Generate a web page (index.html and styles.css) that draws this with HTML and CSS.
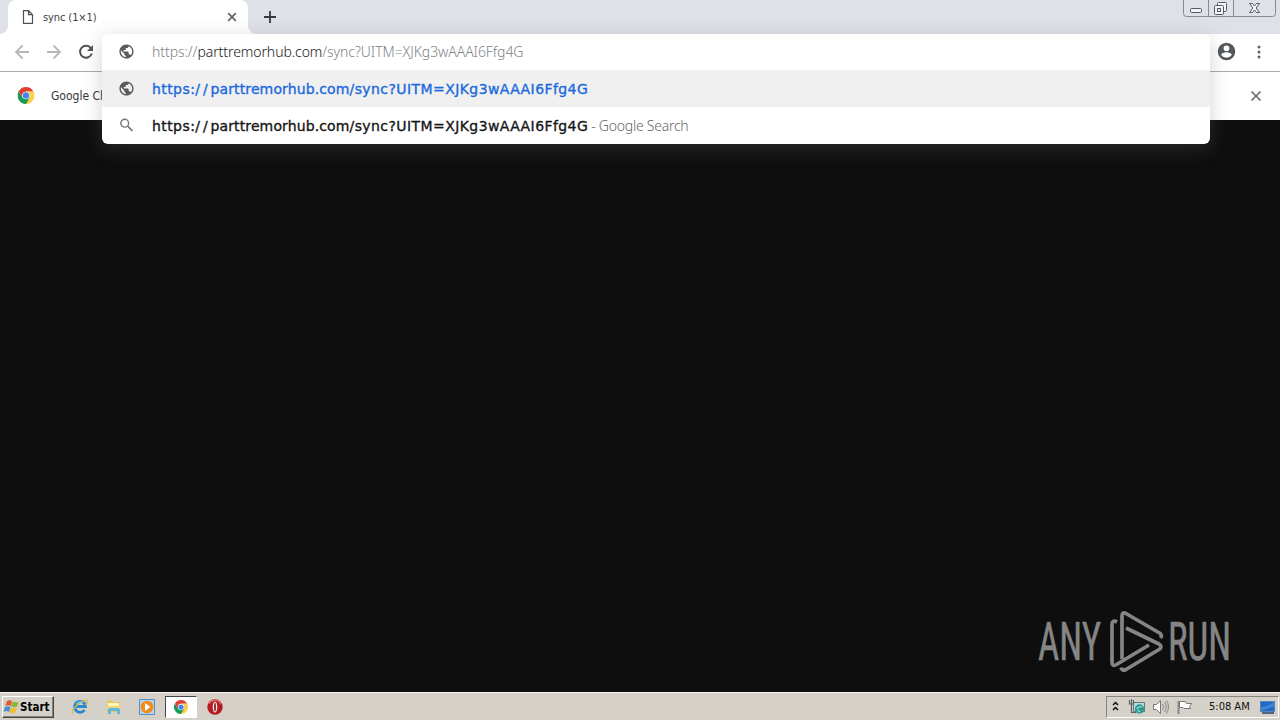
FILE: index.html
```html
<!DOCTYPE html>
<html lang="en">
<head>
<meta charset="utf-8">
<title>sync (1×1)</title>
<link rel="stylesheet" href="styles.css">
</head>
<body>
<svg class="defs" width="0" height="0">
  <defs>
    <symbol id="globe" viewBox="0 0 24 24"><path d="M12 2C6.480 2 2 6.480 2 12s4.480 10 10 10 10-4.480 10-10S17.520 2 12 2zm-1 17.930c-3.950-.490-7-3.850-7-7.930 0-.620.080-1.210.210-1.790L9 15v1c0 1.100.900 2 2 2v1.930zm6.900-2.540c-.260-.810-1-1.390-1.900-1.390h-1v-3c0-.550-.450-1-1-1H8v-2h2c.550 0 1-.450 1-1V7h2c1.100 0 2-.900 2-2v-.410c2.930 1.190 5 4.060 5 7.410 0 2.080-.800 3.970-2.100 5.390z"/></symbol>
    <symbol id="chrome" viewBox="0 0 16 16">
      <path d="M8 4h6.930A8 8 0 0 1 8 16z" fill="#fcd04b"/>
      <path d="M8 8l3.460 2L8 16A8 8 0 0 1 1.070 4l3.470 6z" fill="#139b57"/>
      <path d="M1.070 4 4.540 10 8 8V4h6.930A8 8 0 0 0 1.070 4z" fill="#df3e30"/>
      <circle cx="8" cy="8" r="3.600" fill="#fff"/><circle cx="8" cy="8" r="3" fill="#4586ed"/>
    </symbol>
  </defs>
</svg>
<div class="screen">
  <header class="tabstrip">
    <div class="tab">
      <svg class="doc" width="12" height="14" viewBox="0 0 12 14"><path d="M1.500 .700h5l4 4V13.300h-9zM6.500 .700v4h4" fill="none" stroke="#4d5156" stroke-width="1.200"/></svg>
      <span class="tab-title">sync (1×1)</span>
      <svg width="10" height="10" viewBox="0 0 10 10"><path d="M1.200 1.200l7.600 7.600M8.800 1.200L1.200 8.800" stroke="#606367" stroke-width="1.700"/></svg>
    </div>
    <svg class="newtab" width="12" height="12" viewBox="0 0 12 12"><path d="M6 0v12M0 6h12" stroke="#36393d" stroke-width="1.800"/></svg>
    <svg class="winbtns" width="94" height="18" viewBox="0 0 94 18">
      <path d="M.500 0v13.500a3 3 0 0 0 3 3h86a3 3 0 0 0 3-3V0M25.500 0v16M50.500 0v16" fill="none" stroke="#858a94"/>
      <g fill="#f3f4f6" stroke="#555963"><rect x="7.500" y="8.500" width="11" height="4" rx="1"/><rect x="34.500" y="2.500" width="9" height="9" rx="1"/><rect x="31.500" y="5.500" width="9" height="9" rx="1"/><rect x="34.500" y="8.500" width="3" height="3"/>
      <path d="M66.500 3.500h3l2 2.500 2-2.500h3l-3.300 4.500 3.300 4.500h-3l-2-2.500-2 2.500h-3L69.800 8z"/></g>
    </svg>
  </header>
  <div class="toolbar">
    <svg width="16" height="16" viewBox="0 0 16 16"><path d="M15 8H2M8.500 1.500L2 8l6.500 6.500" fill="none" stroke="#b6b8ba" stroke-width="1.800"/></svg>
    <svg width="16" height="16" viewBox="0 0 16 16"><path d="M1 8h13M7.500 1.500L14 8l-6.500 6.500" fill="none" stroke="#b6b8ba" stroke-width="1.800"/></svg>
    <svg width="16" height="16" viewBox="0 0 16 16"><path d="M13 4.300A6 6 0 1 0 13.800 9.500" fill="none" stroke="#505357" stroke-width="2"/><path d="M15 1v6H9z" fill="#505357"/></svg>
    <svg class="avatar" width="21" height="21" viewBox="0 0 24 24"><path fill="#54575b" d="M12 2a10 10 0 1 0 0 20 10 10 0 0 0 0-20zm0 3a3.300 3.300 0 1 1 0 6.600A3.300 3.300 0 0 1 12 5zm0 14.200a7.200 7.200 0 0 1-6-3.220c.030-1.990 4-3.080 6-3.080s5.970 1.090 6 3.080a7.200 7.200 0 0 1-6 3.220z"/></svg>
    <svg class="dots" width="4" height="14" viewBox="0 0 4 14" fill="#606367"><circle cx="2" cy="2" r="1.500"/><circle cx="2" cy="7" r="1.500"/><circle cx="2" cy="12" r="1.500"/></svg>
  </div>
  <div class="infobar">
    <svg width="18" height="17" viewBox="-.500 0 17 16"><use href="#chrome" width="16" height="16"/></svg>
    <span class="info-text">Google Chrome</span>
    <svg class="info-close" width="12" height="12" viewBox="0 0 12 12"><path d="M1.500 1.500l9 9M10.500 1.500l-9 9" stroke="#696c70" stroke-width="1.700"/></svg>
  </div>
  <main class="page">
    <svg class="watermark" width="194" height="64" viewBox="0 0 194 64">
      <g class="brand"><text x="0" y="51" textLength="63" lengthAdjust="spacingAndGlyphs">ANY</text><text x="130" y="51" textLength="63" lengthAdjust="spacingAndGlyphs">RUN</text></g>
      <g fill="none" stroke="#858585" stroke-width="3.700" stroke-linejoin="round">
        <path d="M84 50V7Q84 2.500 88 4.500L121.500 24q3 2 1 5"/>
        <path d="M79 13q-5-2.500-5 2.500V53q0 5 4.500 2.500L111 36"/>
        <path d="M88 19l33 16q4 2.500 0 5.500L88 60.500q-4 2-5-2"/>
      </g>
    </svg>
  </main>
  <footer class="taskbar">
    <div class="start"><svg width="17" height="16" viewBox="0 0 17 16"><path d="M4 2q2.500-1.500 5 0L7.800 7q-2.500-1.500-5.500 0z" fill="#e65b25"/><path d="M9.600 2.500q3 1.500 6 .300L14 7.700q-3 1.500-6-.400z" fill="#8aba3d"/><path d="M2 8q3-1.500 5.500 0l-1.500 5q-3-2-5.500 0z" fill="#468fd5"/><path d="M7.900 8.500q3 1.500 6 .300L12.300 13.700q-3 1.500-6-.400z" fill="#f2bd32"/></svg><span>Start</span></div>
    <div class="launch">
      <svg width="18" height="18" viewBox="0 0 18 18"><path d="M13.500 12A5.500 5.500 0 1 1 14.500 8.500H5" fill="none" stroke="#2789d0" stroke-width="2.800"/><path d="M2 16Q-1 13 7 6.500T16.500 3q0 2-2 4" fill="none" stroke="#d8b74b" stroke-width="1.300"/><path d="M5 6q3-4 7-1" fill="none" stroke="#80ccef"/></svg>
      <svg width="18" height="18" viewBox="0 0 18 18"><path d="M2 3l5-1 1 2h7v10H2z" fill="#e8c865"/><path d="M3 5h11v4H3z" fill="#fff4ba"/><path d="M2 8h14v3H2z" fill="#ecd783"/><path d="M3 16v-4q0-2 2-2h8q2 0 2 2v4h-3v-3H6v3z" fill="#65b6dc"/></svg>
      <svg width="18" height="18" viewBox="0 0 18 18"><path d="M1.500 1.500h15v15h-15z" fill="#b4d3ed" stroke="#5591c6"/><circle cx="9" cy="9" r="6.300" fill="#f28b18"/><path d="M7 5l5.500 4L7 13z" fill="#fff"/></svg>
      <div class="active"><svg width="14" height="14"><use href="#chrome"/></svg></div>
      <svg width="18" height="18" viewBox="0 0 18 18"><circle cx="9" cy="9" r="7.700" fill="#b51b20"/><path d="M3 6q2-4 6-4t6 4" fill="none" stroke="#dc6b69" stroke-width="1.500"/><ellipse cx="9" cy="9" rx="2.300" ry="5.500" fill="#f4eeeb"/><ellipse cx="9" cy="9" rx=".900" ry="4.500" fill="#8b1a1d"/></svg>
    </div>
    <div class="tray">
      <svg width="8" height="12" viewBox="0 0 8 12"><path d="M1 4L3.500 1.500 6 4M1 9L3.500 6.500 6 9" fill="none" stroke="#111" stroke-width="1.500"/></svg>
      <svg class="net" width="18" height="16" viewBox="0 0 18 16"><path d="M5.500 3.500h11v9h-11z" fill="#b9ddd9" stroke="#67777a"/><path d="M1.500 1v4h4V1M3.500 0v13.500H8" fill="none" stroke="#5b6264" stroke-width="1.200"/><circle cx="11.500" cy="10" r="4.700" fill="#2d9a96"/><path d="M9 10q1-3 5-2M12 13q-2-1-2-2" fill="none" stroke="#b7e8dc" stroke-width="1.200"/></svg>
      <svg class="sound" width="18" height="16" viewBox="0 0 18 16"><path d="M1.500 5.500h3l4-4v13l-4-4h-3z" fill="#fff" stroke="#777"/><path d="M10.500 5q2 3 0 6M12.500 3q3.500 5 0 10M14.500 1.500q4 6.500 0 13" fill="none" stroke="#888"/></svg>
      <svg class="flag" width="17" height="16" viewBox="0 0 17 16"><path d="M2.500 2v13" stroke="#888" stroke-width="2"/><path d="M3.500 2.500h6l1 2h5l-2 3 1 2H8l-1-1H3.500z" fill="#fff" stroke="#777"/></svg>
      <span class="clock">5:08 AM</span>
      <svg width="17" height="14" viewBox="0 0 17 14"><rect x="1.500" y="1.500" width="14" height="10" fill="#236bc1" stroke="#5684bb"/><path d="M2 7Q9 7 15 2v4L2 11z" fill="#3d86d4"/><path d="M3 13h12" stroke="#244568" stroke-width="1.500"/></svg>
    </div>
  </footer>
  <section class="suggestions">
    <div class="row input"><svg class="icon" width="17" height="17"><use href="#globe"/></svg><span class="url">https://<b>parttremorhub.com</b>/sync?UITM=XJKg3wAAAI6Ffg4G</span></div>
    <div class="row selected"><svg class="icon" width="17" height="17"><use href="#globe"/></svg><span class="match">https:<span class="slashes">//</span><span class="host">parttremorhub.com</span>/sync?UITM=XJKg3wAAAI6Ffg4G</span></div>
    <div class="row"><svg class="icon" width="17" height="17" viewBox="0 0 17 17"><circle cx="6.700" cy="6.200" r="3.900" fill="none" stroke="#74777b" stroke-width="1.400"/><path d="M9.700 9.200l4.800 4.800" stroke="#74777b" stroke-width="1.700"/></svg><span class="match">https:<span class="slashes">//</span><span class="host">parttremorhub.com</span>/sync?UITM=XJKg3wAAAI6Ffg4G</span><span class="engine">- Google Search</span></div>
  </section>
</div>
</body>
</html>
```
FILE: styles.css
```css
* { box-sizing: border-box; }
body { margin: 0; font-family: "DejaVu Sans Condensed", "DejaVu Sans", sans-serif; font-stretch: condensed; }
svg { display: block; flex: none; }
.defs { position: absolute; }
.screen { position: relative; display: flex; flex-direction: column; width: 1280px; height: 720px; overflow: hidden; background: #0e0e0e; white-space: nowrap; }
.tabstrip { display: flex; height: 34px; padding-left: 8px; background: #dee1e7; }
.tab { position: relative; display: flex; align-items: center; width: 240px; padding: 0 11px 0 14px; background: #fff; border-radius: 8px 8px 0 0; }
.tab::before, .tab::after { content: ""; position: absolute; bottom: 0; width: 8px; height: 8px; }
.tab::before { left: -8px; background: radial-gradient(circle at 0 0, transparent 7.5px, #fff 8px); }
.tab::after { right: -8px; background: radial-gradient(circle at 100% 0, transparent 7.5px, #fff 8px); }
.tab-title { flex: 1; margin-left: 9px; font-size: 11px; letter-spacing: -0.1px; color: #3c4043; }
.newtab { margin: 11px 0 0 16px; }
.winbtns { margin-left: auto; margin-right: 3px; }
.toolbar { display: flex; align-items: center; gap: 16px; height: 38px; padding: 0 19.5px 2px 14px; background: #fff; border-bottom: 1px solid #a8a9ab; }
.avatar { margin-left: auto; }
.dots { margin-left: 4px; }
.infobar { display: flex; align-items: center; height: 48px; padding: 0 18px 1px 17px; background: #fff; }
.info-text { margin-left: 16px; font-size: 12px; color: #34373a; }
.info-close { margin-left: auto; }
.page { display: flex; flex: 1; align-items: flex-end; justify-content: flex-end; padding: 0 48px 19px 0; background: #0e0e0e; }
.watermark { overflow: visible; }
.brand { font-family: Roboto, sans-serif; font-size: 53px; font-weight: 400; fill: #858585; stroke: #858585; stroke-width: .5px; }
.taskbar { display: flex; align-items: center; height: 28px; padding: 0 1px 0 2px; background: #d5d0c8; border-top: 1px solid #f4f2ed; }
.start { display: flex; align-items: center; width: 52px; height: 22px; padding-left: 0; border: 1px solid; border-color: #fff #454545 #454545 #fff; box-shadow: inset -1px -1px #88847e; font-size: 11.500px; font-weight: bold; color: #000; }
.launch { display: flex; align-items: center; gap: 16px; margin-left: 17px; }
.launch > :nth-child(3) { margin-left: -1px; }
.active { display: flex; align-items: center; justify-content: center; width: 32px; height: 22px; margin: 0 -7px; background: #fff; border: 1px solid; border-color: #444 #fff #fff #444; }
.tray { display: flex; align-items: center; width: 173px; height: 22px; margin-left: auto; padding: 0 2px 0 5px; border: 1px solid; border-color: #88847e #fff #fff #88847e; }
.net { margin-left: 8px; }
.sound { margin-left: 6px; }
.flag { margin-left: 6px; }
.clock { margin: 0 auto 0 16px; font-size: 11px; color: #111; }
.suggestions { position: absolute; left: 102px; top: 34px; width: 1108px; height: 110px; overflow: hidden; background: #fff; border-radius: 6px; box-shadow: 0 4px 20px rgba(110,110,110,.3); }
.row { display: flex; align-items: center; height: 37px; padding-left: 15.5px; color: #161616; }
.input { height: 36px; padding-bottom: 1px; }
.selected { background: #f0f0f0; color: #1b69dc; }
.icon { fill: #585b5f; }
.url, .match { margin-left: 17.5px; font-size: 14px; }
.url { color: #808285; font-family: "Noto Sans", sans-serif; font-stretch: normal; font-weight: 300; letter-spacing: -.07px; }
.url b { color: #161616; font-weight: 300; }
.match { font-family: "DejaVu Sans", sans-serif; font-stretch: normal; letter-spacing: .42px; -webkit-text-stroke: .35px currentColor; }
.slashes { letter-spacing: 2.9px; }
.host { letter-spacing: .12px; }
.engine { margin-left: 3px; font-size: 14px; font-family: "Noto Sans", sans-serif; font-weight: 300; font-stretch: normal; letter-spacing: -.25px; color: #65686b; }
```
